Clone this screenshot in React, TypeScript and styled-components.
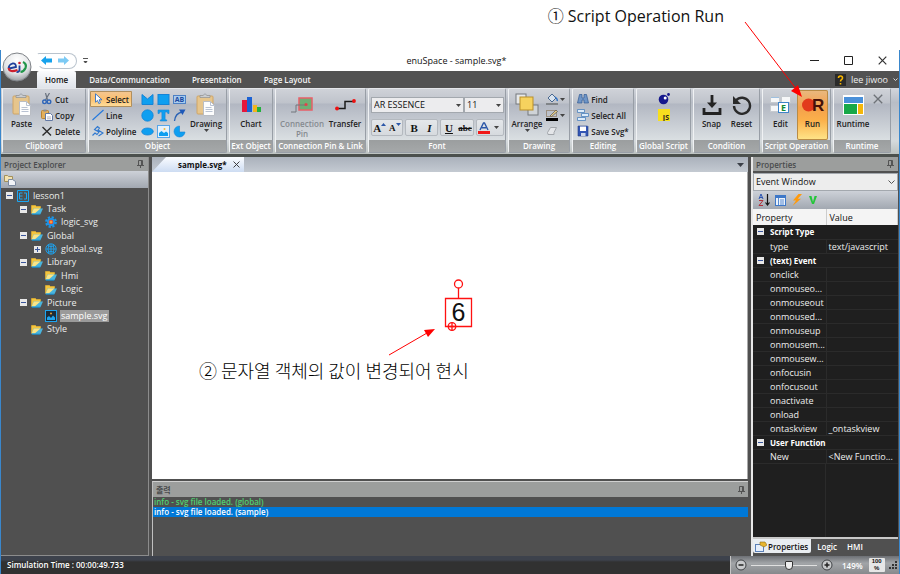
import React from "react";
import styled, { createGlobalStyle, css } from "styled-components";

const GlobalStyle = createGlobalStyle`
  * { box-sizing: border-box; }
  body { margin: 0; background: #fff; font-family: "Open Sans", "Noto Sans CJK KR", sans-serif; font-size: 9px; color: #111; }
  button, select, input, table { font: inherit; color: inherit; }
  button { margin: 0; padding: 0; border: 0; background: none; }
  ul { list-style: none; margin: 0; padding: 0; }
`;

const chromeText = css`
  font-size: 8px;
  font-weight: 600;
`;

/* ---------- Shell ---------- */
const Page = styled.div`
  position: relative;
  min-height: 100vh;
  display: flex;
  flex-direction: column;
`;
const Note = styled.p`
  margin: 0;
  font-size: 16px;
  line-height: 22px;
  white-space: nowrap;
  color: #111;
`;
const NoteBand = styled.header`
  height: 50px;
  display: flex;
  justify-content: flex-end;
  padding: 5px 176px 0 0;
`;
const RunArrow = styled.svg`
  position: absolute;
  top: 20px;
  right: 94px;
  z-index: 3;
  pointer-events: none;
`;
const Frame = styled.div`
  position: relative;
  flex: 1;
  display: flex;
  flex-direction: column;
  border: solid #3a87cc;
  border-width: 0 1px;
  background: #505050;
`;
const TitleBar = styled.div`
  height: 21px;
  display: grid;
  grid-template-columns: 1fr auto 1fr;
  align-items: center;
  background: #fff;
  padding: 0 12px 0 36px;
`;
const AppTitle = styled.h1`
  margin: 0 11px 0 0;
  font-size: 9px;
  font-weight: 400;
  line-height: 18px;
`;
const QuickAccess = styled.div`
  display: flex;
  align-items: center;
  gap: 6px;
`;
const Pill = styled.div`
  display: flex;
  align-items: center;
  gap: 6px;
  height: 16px;
  padding: 0 7px 0 3px;
  border: 1px solid #b9c3cd;
  border-left-color: transparent;
  border-radius: 2px 8px 8px 8px;
`;
const WindowButtons = styled.div`
  display: flex;
  justify-content: flex-end;
  gap: 25px;
`;
const PlainButton = styled.button`
  display: inline-flex;
  align-items: center;
  justify-content: center;
`;
const LogoButton = styled.button`
  position: absolute;
  left: 1px;
  top: 2px;
  z-index: 2;
  width: 30px;
  height: 30px;
`;
const TabStrip = styled.nav`
  height: 17px;
  display: flex;
  align-items: stretch;
  background: #525252;
  padding-left: 36px;
`;
const RibbonTab = styled.button<{ $active?: boolean }>`
  ${chromeText}
  padding: 0 11px;
  line-height: 16px;
  color: #f4f4f4;
  ${(p) =>
    p.$active &&
    css`
      padding: 0 8px;
      margin-right: 2px;
      color: #111;
      border-radius: 2px 2px 0 0;
      background: linear-gradient(#fbfcfd, #dfe3ea);
    `}
`;
const Account = styled.div`
  margin-left: auto;
  padding-right: 1px;
  display: flex;
  align-items: center;
  gap: 5px;
  color: #eee;
`;

/* ---------- Ribbon ---------- */
const RibbonBar = styled.div`
  height: 69px;
  display: flex;
  gap: 2px;
  padding: 0 6px 1px 1px;
  border-bottom: 3px solid #4b504d;
  background: linear-gradient(#d3d6dc, #b8bdc6 22%, #d5dadd 80%, #bcc2c0);
`;
const GroupBox = styled.section<{ $w: number }>`
  flex: none;
  width: ${(p) => p.$w}px;
  display: flex;
  flex-direction: column;
  border: 1px solid #989ea6;
  border-top-color: #e4e6ea;
  border-left-color: #f0f2f4;
  border-radius: 2px;
  background: linear-gradient(#cfd2d8, #bfc3cb 22%, #b2b7c2 24%, #dfe4e6 88%);
`;
const GroupBody = styled.div<{ $center?: boolean }>`
  flex: 1;
  min-height: 0;
  display: flex;
  padding: 1px 1px 0;
  justify-content: ${(p) => (p.$center ? "center" : "flex-start")};
`;
const GroupTitle = styled.h2`
  ${chromeText}
  flex: none;
  margin: 0;
  height: 12px;
  line-height: 12px;
  text-align: center;
  white-space: nowrap;
  color: #fff;
  background: linear-gradient(#9b9e9f, #a5a8a9);
`;
const Large = styled.button<{ $w: number; $on?: boolean; $off?: boolean }>`
  ${chromeText}
  flex: none;
  width: ${(p) => p.$w}px;
  height: 50px;
  display: flex;
  flex-direction: column;
  align-items: center;
  line-height: 10px;
  color: ${(p) => (p.$off ? "#858a90" : "#222")};
  ${(p) =>
    p.$on &&
    css`
      border-radius: 2px;
      box-shadow: inset 0 0 0 1px #b98b45;
      background: linear-gradient(#e9b981, #f4a04c 35%, #fbb04a 60%, #ffe68a);
    `}
`;
const LargeIcon = styled.span`
  flex: none;
  height: 29px;
  display: flex;
  align-items: center;
`;
const Stack = styled.div<{ $w?: number }>`
  flex: none;
  display: flex;
  flex-direction: column;
  align-items: stretch;
  ${(p) => p.$w && `width: ${p.$w}px;`}
  padding-top: 1px;
`;
const Small = styled.button<{ $on?: boolean }>`
  ${chromeText}
  height: 16px;
  display: flex;
  align-items: center;
  justify-content: flex-start;
  gap: 2px;
  padding: 0 2px;
  white-space: nowrap;
  color: #222;
  & > svg { flex: none; }
  ${(p) =>
    p.$on &&
    css`
      border-radius: 1px;
      box-shadow: inset 0 0 0 1px #b08f5e;
      background: linear-gradient(#f3c795, #fbc06f 50%, #ffe0a0);
    `}
`;
const ShapeGrid = styled.div`
  flex: none;
  display: grid;
  grid-template-columns: repeat(3, 16px);
  grid-auto-rows: 16px;
  padding-top: 1px;
  margin-left: 7px;
`;
const FontBody = styled.div`
  flex: 1;
  display: flex;
  flex-direction: column;
  justify-content: space-between;
  padding: 8px 1px 4px 2px;
`;
const Row = styled.div<{ $gap?: number }>`
  display: flex;
  gap: ${(p) => p.$gap || 0}px;
`;
const Picker = styled.label<{ $grow?: boolean }>`
  display: grid;
  align-items: center;
  flex: ${(p) => (p.$grow ? "1" : "0 0 40px")};
  & > * { grid-area: 1 / 1; }
  & > svg { justify-self: end; margin-right: 3px; pointer-events: none; }
`;
const PickerSelect = styled.select`
  appearance: none;
  width: 100%;
  height: 16px;
  padding: 0 2px;
  font-size: 9px;
  line-height: 12px;
  border: 1px solid #a3a8ae;
  border-radius: 0;
  background: #ececee;
`;
const Cluster = styled.div<{ $w: number }>`
  height: 17px;
  display: flex;
  flex: ${(p) => p.$w} 1 0;
  border: 1px solid #b4b9bf;
  border-radius: 2px;
  background: linear-gradient(#e4e7ea, #d6dade);
`;
const Glyph = styled.button<{ $size?: number; $kind?: string }>`
  flex: 1;
  display: inline-flex;
  align-items: center;
  justify-content: center;
  font-family: "Liberation Serif", serif;
  font-size: ${(p) => p.$size || 11}px;
  line-height: 12px;
  font-weight: 700;
  font-style: ${(p) => (p.$kind === "i" ? "italic" : "normal")};
  text-decoration: ${(p) => (p.$kind === "u" ? "underline" : p.$kind === "s" ? "line-through" : "none")};
`;

/* ---------- Work area ---------- */
const Work = styled.main`
  flex: 1;
  display: grid;
  grid-template-columns: 148px minmax(0, 1fr) 147px;
  gap: 3px;
  padding-right: 1px;
  min-height: 0;
`;
const Dock = styled.section`
  display: flex;
  flex-direction: column;
  min-width: 0;
  border: solid #8c8c8c;
  border-width: 0 1px 1px 0;
`;
const DockTitle = styled.div`
  ${chromeText}
  flex: none;
  height: 14px;
  display: flex;
  align-items: center;
  justify-content: space-between;
  padding: 0 4px 0 3px;
  color: #4a4c4d;
  background: #9c9e9d;
`;
const ToolStrip = styled.div<{ $pad?: number; $h: number }>`
  flex: none;
  height: ${(p) => p.$h}px;
  display: flex;
  align-items: center;
  gap: 5px;
  padding: 0 ${(p) => p.$pad || 3}px;
  background: linear-gradient(#cdd1d8, #a2a8b1);
`;
const Tree = styled.ul`
  display: grid;
  grid-auto-rows: 1fr;
  height: 147px;
  margin-top: 1px;
  color: #ececec;
`;
const TreeRow = styled.li<{ $depth: number }>`
  display: flex;
  align-items: center;
  gap: 3px;
  min-height: 0;
  padding-left: ${(p) => 5 + p.$depth * 14}px;
  font-size: 9px;
  line-height: 12px;
`;
const Toggle = styled.button<{ $hidden?: boolean }>`
  width: 8px;
  display: inline-flex;
  visibility: ${(p) => (p.$hidden ? "hidden" : "visible")};
`;
const TreeLabel = styled.span<{ $on?: boolean }>`
  padding: 0 1px;
  ${(p) => p.$on && "background: #9a9a9a; color: #fff;"}
`;

const Center = styled.div`
  display: flex;
  flex-direction: column;
  min-width: 0;
`;
const DocTabs = styled.div`
  height: 15px;
  display: flex;
  align-items: stretch;
  justify-content: space-between;
  padding-right: 4px;
  background: linear-gradient(#aab1bb, #c4cad2);
`;
const DocTab = styled.div`
  display: flex;
  align-items: center;
  justify-content: space-between;
  padding: 0 4px 0 26px;
  width: 92px;
  font-size: 8px;
  font-weight: 700;
  background: linear-gradient(#fafcff, #cddcf2);
  clip-path: polygon(0 100%, 14px 0, 100% 0, 100% 100%);
`;
const Canvas = styled.div`
  position: relative;
  flex: 1;
  min-height: 300px;
  background: #fff;
  border-right: 1px solid #aaa;
`;
const CanvasNote = styled(Note)`
  position: absolute;
  left: 47px;
  top: 187px;
  font-size: 18px;
  font-weight: 300;
  font-family: "Noto Sans CJK KR", sans-serif;
  color: #000;
`;
const CanvasArt = styled.svg`
  position: absolute;
  left: 229px;
  top: 103px;
`;
const Output = styled.section`
  height: 75px;
  margin-top: 2px;
  border-top: 1px solid #d0d0d0;
  border-left: 1px solid #c0c0c0;
`;
const OutputTitle = styled(DockTitle)`
  height: 15px;
  padding-right: 3px;
`;
const LogLine = styled.li<{ $on?: boolean }>`
  height: 10px;
  padding-left: 1px;
  font-size: 8px;
  line-height: 10px;
  font-weight: 600;
  color: ${(p) => (p.$on ? "#fff" : "#4fd070")};
  ${(p) => p.$on && "background: #0078d7;"}
`;

const PropsDock = styled(Dock)`
  border: 0;
  border-left: 2px solid #e8e8e8;
`;
const WindowPicker = styled(Picker)`
  flex: none;
  margin-top: 2px;
`;
const WindowSelect = styled(PickerSelect)`
  height: 18px;
  background: #ededed;
`;
const PropTable = styled.table`
  width: 100%;
  table-layout: fixed;
  border-collapse: collapse;
  background: #1f1f1f;
  color: #eee;
  line-height: 13px;
  th, td { padding: 0 0 0 2px; height: 14px; text-align: left; font-weight: 400; overflow: hidden; text-overflow: ellipsis; white-space: nowrap; }
  thead th { height: 16px; padding-left: 3px; color: #111; background: #f4f4f4; border-right: 1px solid #ccc; }
  tbody tr { border-bottom: 1px solid #2b2b2b; }
  tbody th[scope="row"] { padding-left: 17px; border-right: 1px solid #2b2b2b; }
  tbody th[scope="rowgroup"] { padding-left: 4px; font-size: 8px; font-weight: 700; color: #fff; }
`;
const KeyCol = styled.col`
  width: 73px;
`;
const SectionHead = styled.span`
  display: flex;
  align-items: center;
  gap: 6px;
`;
const TableRest = styled.div`
  flex: 1;
  display: grid;
  grid-template-columns: 73px 1fr;
  background: #1f1f1f;
  & > i { border-right: 1px solid #2b2b2b; }
`;
const BottomTabs = styled.div`
  height: 19px;
  display: flex;
  align-items: flex-start;
  border-top: 2px solid #c8c8c8;
  background: #505050;
`;
const BottomTab = styled.button<{ $on?: boolean }>`
  ${chromeText}
  display: inline-flex;
  align-items: center;
  gap: 1px;
  height: 14px;
  padding: 0 4px 0 6px;
  color: #fff;
  ${(p) => p.$on && "padding: 0 3px 0 2px; color: #111; background: #e9edf1; border-radius: 0 0 2px 2px;"}
`;

/* ---------- Status bar ---------- */
const Status = styled.footer`
  height: 18px;
  display: flex;
  justify-content: space-between;
  color: #fff;
  background: linear-gradient(#3d424c 4px, #313131 6px);
`;
const StatusText = styled.span`
  ${chromeText}
  padding-left: 6px;
  line-height: 18px;
`;
const ZoomBox = styled.div`
  width: 169px;
  display: flex;
  align-items: center;
  gap: 4px;
  padding-left: 4px;
  border-left: 1px solid #c6c6c6;
  background: linear-gradient(#6d7075, #a2a5a8 40%, #86898c);
`;
const Slider = styled.input`
  appearance: none;
  width: 66px;
  height: 14px;
  margin: 0;
  background: linear-gradient(#e0e0e0, #e0e0e0) center / 100% 1px no-repeat;
  &::-webkit-slider-thumb {
    appearance: none;
    width: 8px;
    height: 9px;
    border: 1px solid #333;
    border-radius: 1px 1px 4px 4px;
    background: #eee;
  }
`;
const ZoomValue = styled.span`
  ${chromeText}
  margin-left: 5px;
`;
const FitButton = styled.button`
  width: 16px;
  height: 14px;
  margin-left: 2px;
  border-radius: 1px;
  background: #e6e6e6;
  color: #111;
  font-family: "Liberation Sans", sans-serif;
  font-size: 6px;
  font-weight: 700;
  line-height: 7px;
`;
const FitLine = styled.span`
  display: block;
  height: 7px;
`;

/* ---------- Icons ---------- */
const Caret = ({ c = "#444" }: { c?: string }) => (
  <svg width="5" height="3" viewBox="0 0 5 3"><path d="M0 0h5L2.5 3z" fill={c} /></svg>
);
const Pin = () => (
  <svg width="7" height="8" viewBox="0 0 7 8" fill="none" stroke="#4c4c4c" strokeWidth=".9"><path d="M1.5 5V.5h4V5M4.5 1v4M0 5.500h7M3.500 5.500V8" /></svg>
);
const Cross = ({ s = 9, c = "#333" }: { s?: number; c?: string }) => (
  <svg width={s} height={s} viewBox="0 0 9 9"><path d="M.7.7l7.600 7.600M8.300.7L.7 8.300" stroke={c} strokeWidth="1.200" /></svg>
);
const Clip = () => (
  <svg width="20" height="24" viewBox="0 0 20 24">
    <rect x="1" y="3" width="16" height="18" rx="1" fill="#e6c58c" stroke="#cfa566" />
    <path d="M4 4.500h10V2.500h-3L9 .7 7 2.500H4z" fill="#c9ccd0" stroke="#83888f" strokeWidth=".6" />
    <path d="M7.500 8.500h7l4 4v10h-11z" fill="#fdfdfd" stroke="#b9bdc4" />
    <path d="M14.500 8.500v4h4M9.500 14.500h6M9.500 16.500h7M9.500 18.500h7" fill="none" stroke="#b9c2d2" />
  </svg>
);
const Scissors = () => (
  <svg width="12" height="12" viewBox="0 0 12 12" fill="none"><path d="M4.500 0l2 7M8.500 0l-4 7" stroke="#68717e" strokeWidth="1.200" /><circle cx="3.500" cy="8.800" r="1.800" stroke="#2e65b8" strokeWidth="1.400" /><circle cx="8" cy="8.800" r="1.800" stroke="#2e65b8" strokeWidth="1.400" /></svg>
);
const CopyIcon = () => (
  <svg width="12" height="12" viewBox="0 0 12 12"><rect x=".5" y="1.500" width="7" height="8" rx="1" fill="#e3b05c" stroke="#bb8434" /><path d="M2.500.5h3v2h-3z" fill="#8b8f96" /><path d="M4.500 4.500h5l2 2v5h-7z" fill="#fff" stroke="#6279a4" /><path d="M6 8h4M6 9.800h4" stroke="#99a" strokeWidth=".7" /></svg>
);
const DeleteIcon = () => (
  <svg width="12" height="12" viewBox="0 0 12 12"><path d="M1.500 2l8.500 8.500M10.500 2L1.500 10.500" stroke="#2b2b2b" strokeWidth="1.400" /></svg>
);
const Cursor = () => (
  <svg width="12" height="12" viewBox="0 0 12 12"><path d="M3.500.8v8.400l2-1.800 1.300 3.100 1.600-.7-1.300-3H10z" fill="#fff" stroke="#2f6fc4" strokeWidth=".9" /></svg>
);
const LineIcon = () => (
  <svg width="12" height="12" viewBox="0 0 12 12"><path d="M.5 11L11.500 1" stroke="#2277dd" strokeWidth="1.100" /></svg>
);
const PolyIcon = () => (
  <svg width="12" height="12" viewBox="0 0 12 12"><path d="M.5 10.500L3 8l2 1.500L7 7 2.500 4.500 5.500 1.500 7.500 3 6 5l5 3-4.500 3" fill="none" stroke="#2f78cf" strokeWidth="1.100" /></svg>
);
const B = "#0f9ff0";
const shapes: [string, React.ReactNode][] = [
  ["Polygon", <path d="M1 1.500l5.500 4.500L12 1.500v10H1z" fill={B} stroke="#1583d6" />],
  ["Rectangle", <rect x="1" y="1.500" width="11" height="10" fill={B} stroke="#1583d6" />],
  ["Text box", <><rect x=".5" y="2.500" width="12" height="8" fill="#a9cbee" stroke="#4d80c4" /><text x="6.500" y="9" fontSize="7" fontWeight="700" textAnchor="middle" fill="#1c4aa0">AB</text></>],
  ["Circle", <circle cx="6.500" cy="6.500" r="5.700" fill={B} stroke="#1583d6" strokeWidth=".8" />],
  ["Text", <path d="M1 1h11v3.500h-1.200L10.300 3H8.100v7.500l1.600.4v1.100H3.300v-1.100l1.600-.4V3H2.700l-.5 1.500H1z" fill={B} stroke="#1583d6" strokeWidth=".6" />],
  ["Arc", <><path d="M1.500 12C2 7 4 4 9 3" fill="none" stroke="#2a62b4" strokeWidth="1.300" /><path d="M6 .5h6.500L9.500 6z" fill="#1d58b8" /></>],
  ["Ellipse", <ellipse cx="6.500" cy="6.500" rx="5.800" ry="3.500" fill={B} stroke="#1583d6" strokeWidth=".8" />],
  ["Image", <><rect x=".5" y=".5" width="12" height="12" fill="#e5f1fb" stroke="#57a5e8" /><path d="M2 11V8l2.500-2L7 8l2-1.500L11 8v3z" fill={B} /><circle cx="7.500" cy="4" r="1" fill="#f0b93c" /></>],
  ["Pie", <path d="M6.500 1a5.500 5.500 0 1 0 5.500 6H6.500z" fill={B} stroke="#1583d6" strokeWidth=".6" />],
];
const Folder = () => (
  <svg width="12" height="11" viewBox="0 0 12 11"><path d="M.5 9.500V1.500h4l1 1h4v2" fill="#f4c53e" stroke="#e5b32f" strokeWidth=".7" /><path d="M.5 10l2-5.500H12L9.500 10z" fill="#4ab4dd" /><path d="M.8 9.300l2-4.800h6.700L4 9.300z" fill="#fbe486" /><path d="M.8 10.200h8.500" stroke="#1593d6" /></svg>
);
const treeIcons: Record<string, React.ReactNode> = {
  folder: <Folder />,
  project: <svg width="12" height="12" viewBox="0 0 12 12" fill="none" stroke="#1aa7f5"><path d="M.5.5h11v11H.5zM5.500 3H2.500v6h3M2.500 6h3M7 3h2.500v6H7" /></svg>,
  gear: <svg width="12" height="12" viewBox="0 0 12 12"><circle cx="6" cy="6" r="4.800" fill="none" stroke="#1d95e8" strokeWidth="2.200" strokeDasharray="2.200 1.570" /><circle cx="6" cy="6" r="4" fill="#1d95e8" /><circle cx="6" cy="6" r="2.300" fill="#e8432d" /><path d="M6 4.500v3M4.500 6h3" stroke="#ffd24a" strokeWidth=".8" /></svg>,
  globe: <svg width="12" height="12" viewBox="0 0 12 12" fill="none" stroke="#1da4f0" strokeWidth=".9"><circle cx="6" cy="6" r="5.200" /><path d="M1 6h10M6 1v10M2.300 2.500Q6 5 9.700 2.500M2.300 9.500Q6 7 9.700 9.500M4 1.500Q2 6 4 10.500M8 1.500Q10 6 8 10.500" /></svg>,
  image: <svg width="12" height="12" viewBox="0 0 12 12"><rect x=".5" y=".5" width="11" height="11" fill="#1d2c38" stroke="#1da4f0" /><path d="M2 10V7.500L4 6l2 2 2-2.500 2 2V10z" fill="#1da4f0" /><circle cx="6" cy="3.500" r="1" fill="#e8a33a" /></svg>,
};
const Box = ({ plus, s = 7 }: { plus?: boolean; s?: number }) => (
  <svg width={s} height={s} viewBox="0 0 7 7"><rect width="7" height="7" fill="#e8e8e8" /><path d={plus ? "M1 3.500h5M3.500 1v5" : "M1 3.500h5"} stroke="#3a569c" /></svg>
);
const Signal = ({ d, c }: { d: string; c: string }) => (
  <svg width="12" height="12" viewBox="0 0 12 12"><path d={d} fill={c} /></svg>
);

/* ---------- Data ---------- */
type Node = { depth: number; label: string; icon: string; open?: boolean; closed?: boolean; on?: boolean };
const nodes: Node[] = [
  { depth: 0, label: "lesson1", icon: "project", open: true },
  { depth: 1, label: "Task", icon: "folder", open: true },
  { depth: 2, label: "logic_svg", icon: "gear" },
  { depth: 1, label: "Global", icon: "folder", open: true },
  { depth: 2, label: "global.svg", icon: "globe", closed: true },
  { depth: 1, label: "Library", icon: "folder", open: true },
  { depth: 2, label: "Hmi", icon: "folder" },
  { depth: 2, label: "Logic", icon: "folder" },
  { depth: 1, label: "Picture", icon: "folder", open: true },
  { depth: 2, label: "sample.svg", icon: "image", on: true },
  { depth: 1, label: "Style", icon: "folder" },
];
const sections: { title: string; rows: [string, string][] }[] = [
  { title: "Script Type", rows: [["type", "text/javascript"]] },
  {
    title: "(text) Event",
    rows: [
      ["onclick", ""], ["onmouseo...", ""], ["onmouseout", ""], ["onmoused...", ""], ["onmouseup", ""],
      ["onmousem...", ""], ["onmousew...", ""], ["onfocusin", ""], ["onfocusout", ""], ["onactivate", ""],
      ["onload", ""], ["ontaskview", "_ontaskview"],
    ],
  },
  { title: "User Function", rows: [["New", "<New Functio..."]] },
];

const Group = ({ title, w, children }: { title: string; w: number; children: React.ReactNode }) => (
  <GroupBox $w={w} aria-label={title}>
    {children}
    <GroupTitle>{title}</GroupTitle>
  </GroupBox>
);

const Ribbon = () => (
  <RibbonBar>
    <Group title="Clipboard" w={84}>
      <GroupBody>
        <Large $w={35}><LargeIcon><Clip /></LargeIcon>Paste</Large>
        <Stack>
          <Small><Scissors />Cut</Small>
          <Small><CopyIcon />Copy</Small>
          <Small><DeleteIcon />Delete</Small>
        </Stack>
      </GroupBody>
    </Group>
    <Group title="Object" w={139}>
      <GroupBody>
        <Stack $w={42}>
          <Small $on><Cursor />Select</Small>
          <Small><LineIcon />Line</Small>
          <Small><PolyIcon />Polyline</Small>
        </Stack>
        <ShapeGrid>
          {shapes.map(([name, art]) => (
            <PlainButton key={name} aria-label={name}><svg width="13" height="13" viewBox="0 0 13 13">{art}</svg></PlainButton>
          ))}
        </ShapeGrid>
        <Large $w={38}><LargeIcon><Clip /></LargeIcon>Drawing<Caret /></Large>
      </GroupBody>
    </Group>
    <Group title="Ext Object" w={44}>
      <GroupBody $center>
        <Large $w={40}>
          <LargeIcon>
            <svg width="19" height="17" viewBox="0 0 19 17"><path d="M0 4h5v12H0z" fill="#e6163c" /><path d="M5 1h5v15H5z" fill="#1b62d4" /><path d="M11 9h4v7h-4z" fill="#f2b41c" /><path d="M15 11h4v5h-4z" fill="#22b13c" /></svg>
          </LargeIcon>
          Chart
        </Large>
      </GroupBody>
    </Group>
    <Group title="Connection Pin & Link" w={91}>
      <GroupBody>
        <Large $w={50} $off>
          <LargeIcon>
            <svg width="24" height="18" viewBox="0 0 24 18"><rect x="9" y="2" width="13" height="12" fill="#6fae74" stroke="#e85f68" strokeWidth="1.500" /><path d="M1 16h5V9h10" fill="none" stroke="#73777d" /><circle cx="16" cy="8.500" r="1.600" fill="#e2404a" /></svg>
          </LargeIcon>
          Connection Pin
        </Large>
        <Large $w={36}>
          <LargeIcon>
            <svg width="21" height="15" viewBox="0 0 21 15"><path d="M2 11.500h8v-7h9" fill="none" stroke="#1a1a1a" strokeWidth="1.500" /><circle cx="2" cy="11.500" r="1.900" fill="#e11" /><circle cx="19" cy="4" r="1.900" fill="#e11" /></svg>
          </LargeIcon>
          Transfer
        </Large>
      </GroupBody>
    </Group>
    <Group title="Font" w={138}>
      <FontBody>
        <Row>
          <Picker $grow><PickerSelect aria-label="Font family"><option>AR ESSENCE</option></PickerSelect><Caret /></Picker>
          <Picker><PickerSelect aria-label="Font size"><option>11</option></PickerSelect><Caret /></Picker>
        </Row>
        <Row $gap={2}>
          <Cluster $w={33}>
            <Glyph aria-label="Grow font">A<svg width="5" height="9" viewBox="0 0 5 9"><path d="M0 3h5L2.500 0z" fill="#2b57a8" /></svg></Glyph>
            <Glyph $size={9} aria-label="Shrink font">A<svg width="5" height="9" viewBox="0 0 5 9"><path d="M0 0h5L2.500 3z" fill="#2b57a8" /></svg></Glyph>
          </Cluster>
          <Cluster $w={33}><Glyph>B</Glyph><Glyph $kind="i">I</Glyph></Cluster>
          <Cluster $w={35}><Glyph $kind="u">U</Glyph><Glyph $size={9} $kind="s">abc</Glyph></Cluster>
          <Cluster $w={28}>
            <Glyph aria-label="Font colour"><svg width="12" height="12" viewBox="0 0 12 12"><path d="M2 8L5.500 1h1L10 8M3.800 5.800h4.400" fill="none" stroke="#2b57a8" strokeWidth="1.400" /><path d="M0 9h12v3H0z" fill="#f01818" /></svg></Glyph>
            <Glyph aria-label="Colour menu"><Caret /></Glyph>
          </Cluster>
        </Row>
      </FontBody>
    </Group>
    <Group title="Drawing" w={62}>
      <GroupBody>
        <Large $w={34}>
          <LargeIcon>
            <svg width="24" height="23" viewBox="0 0 24 23"><rect x="1" y="1" width="10" height="10" fill="#e6e8ea" stroke="#74787d" /><rect x="13" y="12" width="10" height="10" fill="#cfd3d7" stroke="#74787d" /><rect x="5" y="4" width="13" height="13" fill="#f6d25e" stroke="#b98f2a" /></svg>
          </LargeIcon>
          Arrange<Caret />
        </Large>
        <Stack>
          <Small aria-label="Fill"><svg width="12" height="12" viewBox="0 0 12 12"><path d="M2 5l4-4 4 4-4 4z" fill="#d9e3ee" stroke="#49688f" /><path d="M9 4q3 2 2 4" fill="none" stroke="#2b6fc4" strokeWidth="1.400" /><path d="M0 10h12v2H0z" fill="#808488" /></svg><Caret /></Small>
          <Small aria-label="Stroke"><svg width="12" height="12" viewBox="0 0 12 12"><rect x=".5" y="1.500" width="10" height="6" fill="none" stroke="#9b8f80" /><path d="M4 7l6-6 1.500 1.500-6 5z" fill="#e9cf8a" stroke="#444" strokeWidth=".6" /><path d="M0 9h12v3H0z" fill="#000" /></svg><Caret /></Small>
          <Small aria-label="Eraser"><svg width="12" height="12" viewBox="0 0 12 12"><path d="M1.500 7.500l3-5h6l-2.500 5v2h-6z" fill="#e4e6e9" stroke="#a2a6ab" /></svg></Small>
        </Stack>
      </GroupBody>
    </Group>
    <Group title="Editing" w={62}>
      <GroupBody $center>
        <Stack>
          <Small><svg width="12" height="12" viewBox="0 0 12 12"><path d="M2.500 1.500h2.500v3.500h2V1.500h2.500l2 8.500H7V7H5v3H.5z" fill="#6f95c6" stroke="#305a94" strokeWidth=".7" /></svg>Find</Small>
          <Small><svg width="12" height="12" viewBox="0 0 12 12"><path d="M.5.5h7v3h-7zM4.500 4.500h7v3h-7zM.5 8.500h8v3h-8z" fill="#dcebfa" stroke="#4b81bd" strokeWidth=".8" /></svg>Select All</Small>
          <Small><svg width="12" height="12" viewBox="0 0 12 12"><path d="M1 1h9.500l.5.5V11H1z" fill="#3356b4" stroke="#213c88" strokeWidth=".6" /><path d="M3 1.500h6V6H3z" fill="#fff" /><path d="M4 8h4.500v3H4z" fill="#cdd6ea" /></svg>Save Svg*</Small>
        </Stack>
      </GroupBody>
    </Group>
    <Group title="Global Script" w={55}>
      <GroupBody $center>
        <Stack>
          <Small aria-label="Lua"><svg width="12" height="12" viewBox="0 0 12 12"><circle cx="5.500" cy="6.500" r="4.800" fill="#16188c" /><circle cx="7.200" cy="5" r="1.500" fill="#fff" /><circle cx="10.500" cy="1.500" r="1.400" fill="#16188c" /></svg></Small>
          <Small aria-label="JavaScript"><svg width="12" height="12" viewBox="0 0 12 12"><rect width="12" height="12" fill="#f7df1e" /><text x="11" y="10.500" textAnchor="end" fontSize="7" fontWeight="700" fill="#222">JS</text></svg></Small>
        </Stack>
      </GroupBody>
    </Group>
    <Group title="Condition" w={67}>
      <GroupBody $center>
        <Large $w={30}><LargeIcon><svg width="20" height="22" viewBox="0 0 20 22"><path d="M10 1v10M2 14v5.500h16V14" fill="none" stroke="#222" strokeWidth="2.800" /><path d="M5 8.500h10L10 14z" fill="#222" /></svg></LargeIcon>Snap</Large>
        <Large $w={30}><LargeIcon><svg width="20" height="20" viewBox="0 0 20 20"><path d="M4 5.500A8 8 0 1 1 2 11" fill="none" stroke="#2a2a2a" strokeWidth="2.400" /><path d="M1 1v8h8z" fill="#2a2a2a" /></svg></LargeIcon>Reset</Large>
      </GroupBody>
    </Group>
    <Group title="Script Operation" w={69}>
      <GroupBody>
        <Large $w={33}><LargeIcon><svg width="21" height="17" viewBox="0 0 21 17"><path d="M.5.5h9v6h-9zM11.500.5h9v6h-9zM.5 9.500h9v6h-9z" fill="#f6f7f8" stroke="#c6cacf" /><path d="M1 1h8v1H1z" fill="#9fc0e0" /><rect x="8.500" y="6.500" width="10" height="10" fill="#fff" stroke="#3f85c9" /><text x="13.500" y="14.500" textAnchor="middle" fontSize="9" fontWeight="700" fill="#138a36">E</text></svg></LargeIcon>Edit</Large>
        <Large $w={31} $on><LargeIcon><svg width="24" height="20" viewBox="0 0 24 20"><circle cx="7.500" cy="10" r="6.500" fill="#e23a1c" /><text x="11" y="16" fontFamily="Liberation Sans" fontSize="17" fontWeight="700" fill="#451008">R</text></svg></LargeIcon>Run</Large>
      </GroupBody>
    </Group>
    <Group title="Runtime" w={58}>
      <GroupBody>
        <Large $w={36}><LargeIcon><svg width="21" height="20" viewBox="0 0 21 20"><path d="M0 0h21v20H0z" fill="#fff" /><path d="M1 2h19v6H1z" fill="#4a90d9" /><path d="M1 9h13v10H1z" fill="#18a848" /><path d="M15 9h5v10h-5z" fill="#f5b70a" /></svg></LargeIcon>Runtime</Large>
        <Stack><Small aria-label="Close runtime"><Cross s={10} c="#6e7278" /></Small></Stack>
      </GroupBody>
    </Group>
  </RibbonBar>
);

export default function App() {
  return (
    <Page>
      <GlobalStyle />
      <NoteBand><Note>① Script Operation Run</Note></NoteBand>
      <RunArrow width="64" height="80" viewBox="0 0 64 80"><path d="M3 2l52 68" stroke="#f00" /><path d="M60 77l-11-6 7-6z" fill="#f00" /></RunArrow>
      <Frame>
        <LogoButton aria-label="Application menu">
          <svg width="30" height="30" viewBox="0 0 30 30">
            <defs><radialGradient id="orb" cx=".5" cy=".25" r=".8"><stop offset="0" stopColor="#fff" /><stop offset=".6" stopColor="#e2e4e6" /><stop offset="1" stopColor="#8d9196" /></radialGradient></defs>
            <circle cx="15" cy="15" r="14" fill="url(#orb)" stroke="#7f8388" />
            <path d="M7 16.500l7-1.500q0-4-3.500-3.500Q7 12.500 6.500 16" fill="none" stroke="#1f3f9a" strokeWidth="1.800" />
            <path d="M6.500 16q1 5 9 2" fill="none" stroke="#cc1f2f" strokeWidth="2.200" />
            <path d="M17.500 13.500v5q-1 2-3 1.500" fill="none" stroke="#1f3f9a" strokeWidth="1.800" />
            <circle cx="17.500" cy="11" r="1.300" fill="#cc1f2f" />
            <path d="M21 10q4 2 2.500 6-1.500 3.500-5 4" fill="none" stroke="#23964a" strokeWidth="2.200" />
          </svg>
        </LogoButton>
        <TitleBar>
          <QuickAccess>
            <Pill>
              <PlainButton aria-label="Undo"><svg width="11" height="9" viewBox="0 0 11 9"><path d="M0 4.500L5 0v2.500h6v4H5V9z" fill="#16a2ec" /></svg></PlainButton>
              <PlainButton aria-label="Redo"><svg width="11" height="9" viewBox="0 0 11 9"><path d="M11 4.500L6 0v2.500H0v4h6V9z" fill="#7ccaf4" /></svg></PlainButton>
            </Pill>
            <PlainButton aria-label="Customize"><svg width="5" height="6" viewBox="0 0 5 6"><path d="M0 .5h5M1 3.500h3L2.500 5z" stroke="#444" strokeWidth=".9" fill="#444" /></svg></PlainButton>
          </QuickAccess>
          <AppTitle>enuSpace - sample.svg*</AppTitle>
          <WindowButtons>
            <PlainButton aria-label="Minimize"><svg width="9" height="9" viewBox="0 0 9 9"><path d="M0 4.500h9" stroke="#222" /></svg></PlainButton>
            <PlainButton aria-label="Maximize"><svg width="9" height="9" viewBox="0 0 9 9"><path d="M.5.5h8v8h-8z" fill="none" stroke="#222" /></svg></PlainButton>
            <PlainButton aria-label="Close"><Cross /></PlainButton>
          </WindowButtons>
        </TitleBar>
        <TabStrip>
          <RibbonTab $active>Home</RibbonTab>
          <RibbonTab>Data/Communcation</RibbonTab>
          <RibbonTab>Presentation</RibbonTab>
          <RibbonTab>Page Layout</RibbonTab>
          <Account>
            <PlainButton aria-label="Help"><svg width="11" height="12" viewBox="0 0 11 12"><rect width="11" height="12" fill="#2a2a2a" /><path d="M3.500 4Q3.500 2 5.500 2t2 2q0 1-1 1.600T5.500 7.500M5.500 9v1.500" fill="none" stroke="#f7b500" strokeWidth="1.600" /></svg></PlainButton>
            <span>lee jiwoo</span>
            <svg width="5" height="4" viewBox="0 0 5 4"><path d="M.5.5l2 2 2-2" fill="none" stroke="#ddd" /></svg>
          </Account>
        </TabStrip>
        <Ribbon />
        <Work>
          <Dock aria-label="Project Explorer">
            <DockTitle>Project Explorer<Pin /></DockTitle>
            <ToolStrip $h={17}>
              <PlainButton aria-label="Show files"><svg width="12" height="12" viewBox="0 0 12 12"><path d="M.5 1.500h3l1 1h4v5h-8z" fill="#f3e3b0" stroke="#a3905a" /><path d="M4.500 5.500h4l3 2v4h-7z" fill="#f2f4f8" stroke="#7c8aa0" /></svg></PlainButton>
            </ToolStrip>
            <Tree>
              {nodes.map((n) => (
                <TreeRow key={n.label} $depth={n.depth}>
                  <Toggle $hidden={!n.open && !n.closed} aria-label={`Toggle ${n.label}`}><Box plus={n.closed} /></Toggle>
                  {treeIcons[n.icon]}
                  <TreeLabel $on={n.on}>{n.label}</TreeLabel>
                </TreeRow>
              ))}
            </Tree>
          </Dock>
          <Center>
            <DocTabs>
              <DocTab>sample.svg*<PlainButton aria-label="Close document"><Cross s={7} /></PlainButton></DocTab>
              <PlainButton aria-label="Document list"><svg width="7" height="4" viewBox="0 0 7 4"><path d="M0 0h7L3.500 4z" fill="#3b4048" /></svg></PlainButton>
            </DocTabs>
            <Canvas>
              <CanvasArt width="96" height="86" viewBox="0 0 96 86">
                <g fill="none" stroke="#f11" strokeWidth="1.300">
                  <circle cx="77.500" cy="9" r="4" /><path d="M77.500 13v10M64.500 23.500h26v28h-26z" /><circle cx="71" cy="51.500" r="3.800" /><path d="M71 47.500v8M67 51.500h8" />
                </g>
                <text x="77.500" y="46" textAnchor="middle" fontFamily="Liberation Sans" fontSize="25" fill="#111">6</text>
                <path d="M8 80l38-22" stroke="#f00" /><path d="M54 54l-7 8-4-7z" fill="#f00" />
              </CanvasArt>
              <CanvasNote>② 문자열 객체의 값이 변경되어 현시</CanvasNote>
            </Canvas>
            <Output aria-label="출력">
              <OutputTitle>출력<Pin /></OutputTitle>
              <ul>
                <LogLine>info - svg file loaded. (global)</LogLine>
                <LogLine $on>info - svg file loaded. (sample)</LogLine>
              </ul>
            </Output>
          </Center>
          <PropsDock aria-label="Properties">
            <DockTitle>Properties<Pin /></DockTitle>
            <WindowPicker>
              <WindowSelect aria-label="Window"><option>Event Window</option></WindowSelect>
              <svg width="7" height="5" viewBox="0 0 7 5"><path d="M.5.5l3 3 3-3" fill="none" stroke="#555" /></svg>
            </WindowPicker>
            <ToolStrip $h={18} $pad={5}>
              <PlainButton aria-label="Sort"><svg width="12" height="12" viewBox="0 0 12 12"><path d="M1 5L3 0l2 5M1.500 3.500h3" fill="none" stroke="#2c55b0" /><path d="M1 6.500h4L1 11.500h4" fill="none" stroke="#b0303a" /><path d="M9.500 0v10M7.500 8.500l2 2.500 2-2.500" fill="none" stroke="#111" strokeWidth="1.200" /></svg></PlainButton>
              <PlainButton aria-label="Categories"><svg width="11" height="11" viewBox="0 0 11 11"><rect x=".5" y=".5" width="10" height="10" fill="#eaf2fc" stroke="#3e78c8" /><path d="M1 2h9" stroke="#3e78c8" strokeWidth="2" /><path d="M3.500 3v7M5 5h4M5 7h4M5 9h4" stroke="#5a8bd0" /></svg></PlainButton>
              <PlainButton aria-label="Events"><Signal c="#ff9a0c" d="M7.500 0L2 6.500h3L1.500 12 10 4.800H6.800L11 0z" /></PlainButton>
              <PlainButton aria-label="Variables"><Signal c="#24c63a" d="M1 2h2.500L5 8l1.500-6H9L6 10H4z" /></PlainButton>
            </ToolStrip>
            <PropTable>
              <colgroup><KeyCol /><col /></colgroup>
              <thead><tr><th scope="col">Property</th><th scope="col">Value</th></tr></thead>
              {sections.map((s) => (
                <tbody key={s.title}>
                  <tr><th scope="rowgroup" colSpan={2}><SectionHead><Box />{s.title}</SectionHead></th></tr>
                  {s.rows.map(([k, v]) => (
                    <tr key={k}><th scope="row">{k}</th><td>{v}</td></tr>
                  ))}
                </tbody>
              ))}
            </PropTable>
            <TableRest><i /></TableRest>
            <BottomTabs>
              <BottomTab $on><svg width="12" height="11" viewBox="0 0 12 11"><rect x=".5" y="3.500" width="8" height="7" fill="#e6eefa" stroke="#5a80b8" /><path d="M5 1h5l2 3-3 2-4-2z" fill="#e7b52f" stroke="#8e6d1a" strokeWidth=".6" /></svg>Properties</BottomTab>
              <BottomTab>Logic</BottomTab>
              <BottomTab>HMI</BottomTab>
            </BottomTabs>
          </PropsDock>
        </Work>
        <Status>
          <StatusText>Simulation Time : 00:00:49.733</StatusText>
          <ZoomBox>
            <PlainButton aria-label="Zoom out"><svg width="12" height="12" viewBox="0 0 12 12"><circle cx="6" cy="6" r="5" fill="#c8cacc" stroke="#3f4245" /><path d="M3.500 6h5" stroke="#222" strokeWidth="1.500" /></svg></PlainButton>
            <Slider type="range" aria-label="Zoom" min={0} max={100} defaultValue={59} />
            <PlainButton aria-label="Zoom in"><svg width="12" height="12" viewBox="0 0 12 12"><circle cx="6" cy="6" r="5" fill="#c8cacc" stroke="#3f4245" /><path d="M3.500 6h5M6 3.500v5" stroke="#222" strokeWidth="1.500" /></svg></PlainButton>
            <ZoomValue>149%</ZoomValue>
            <FitButton><FitLine>100</FitLine><FitLine>%</FitLine></FitButton>
            <svg width="9" height="9" viewBox="0 0 9 9"><path d="M6 0h2v2H6zM3 3h2v2H3zM6 3h2v2H6zM0 6h2v2H0zM3 6h2v2H3zM6 6h2v2H6z" fill="#333" /></svg>
          </ZoomBox>
        </Status>
      </Frame>
    </Page>
  );
}
